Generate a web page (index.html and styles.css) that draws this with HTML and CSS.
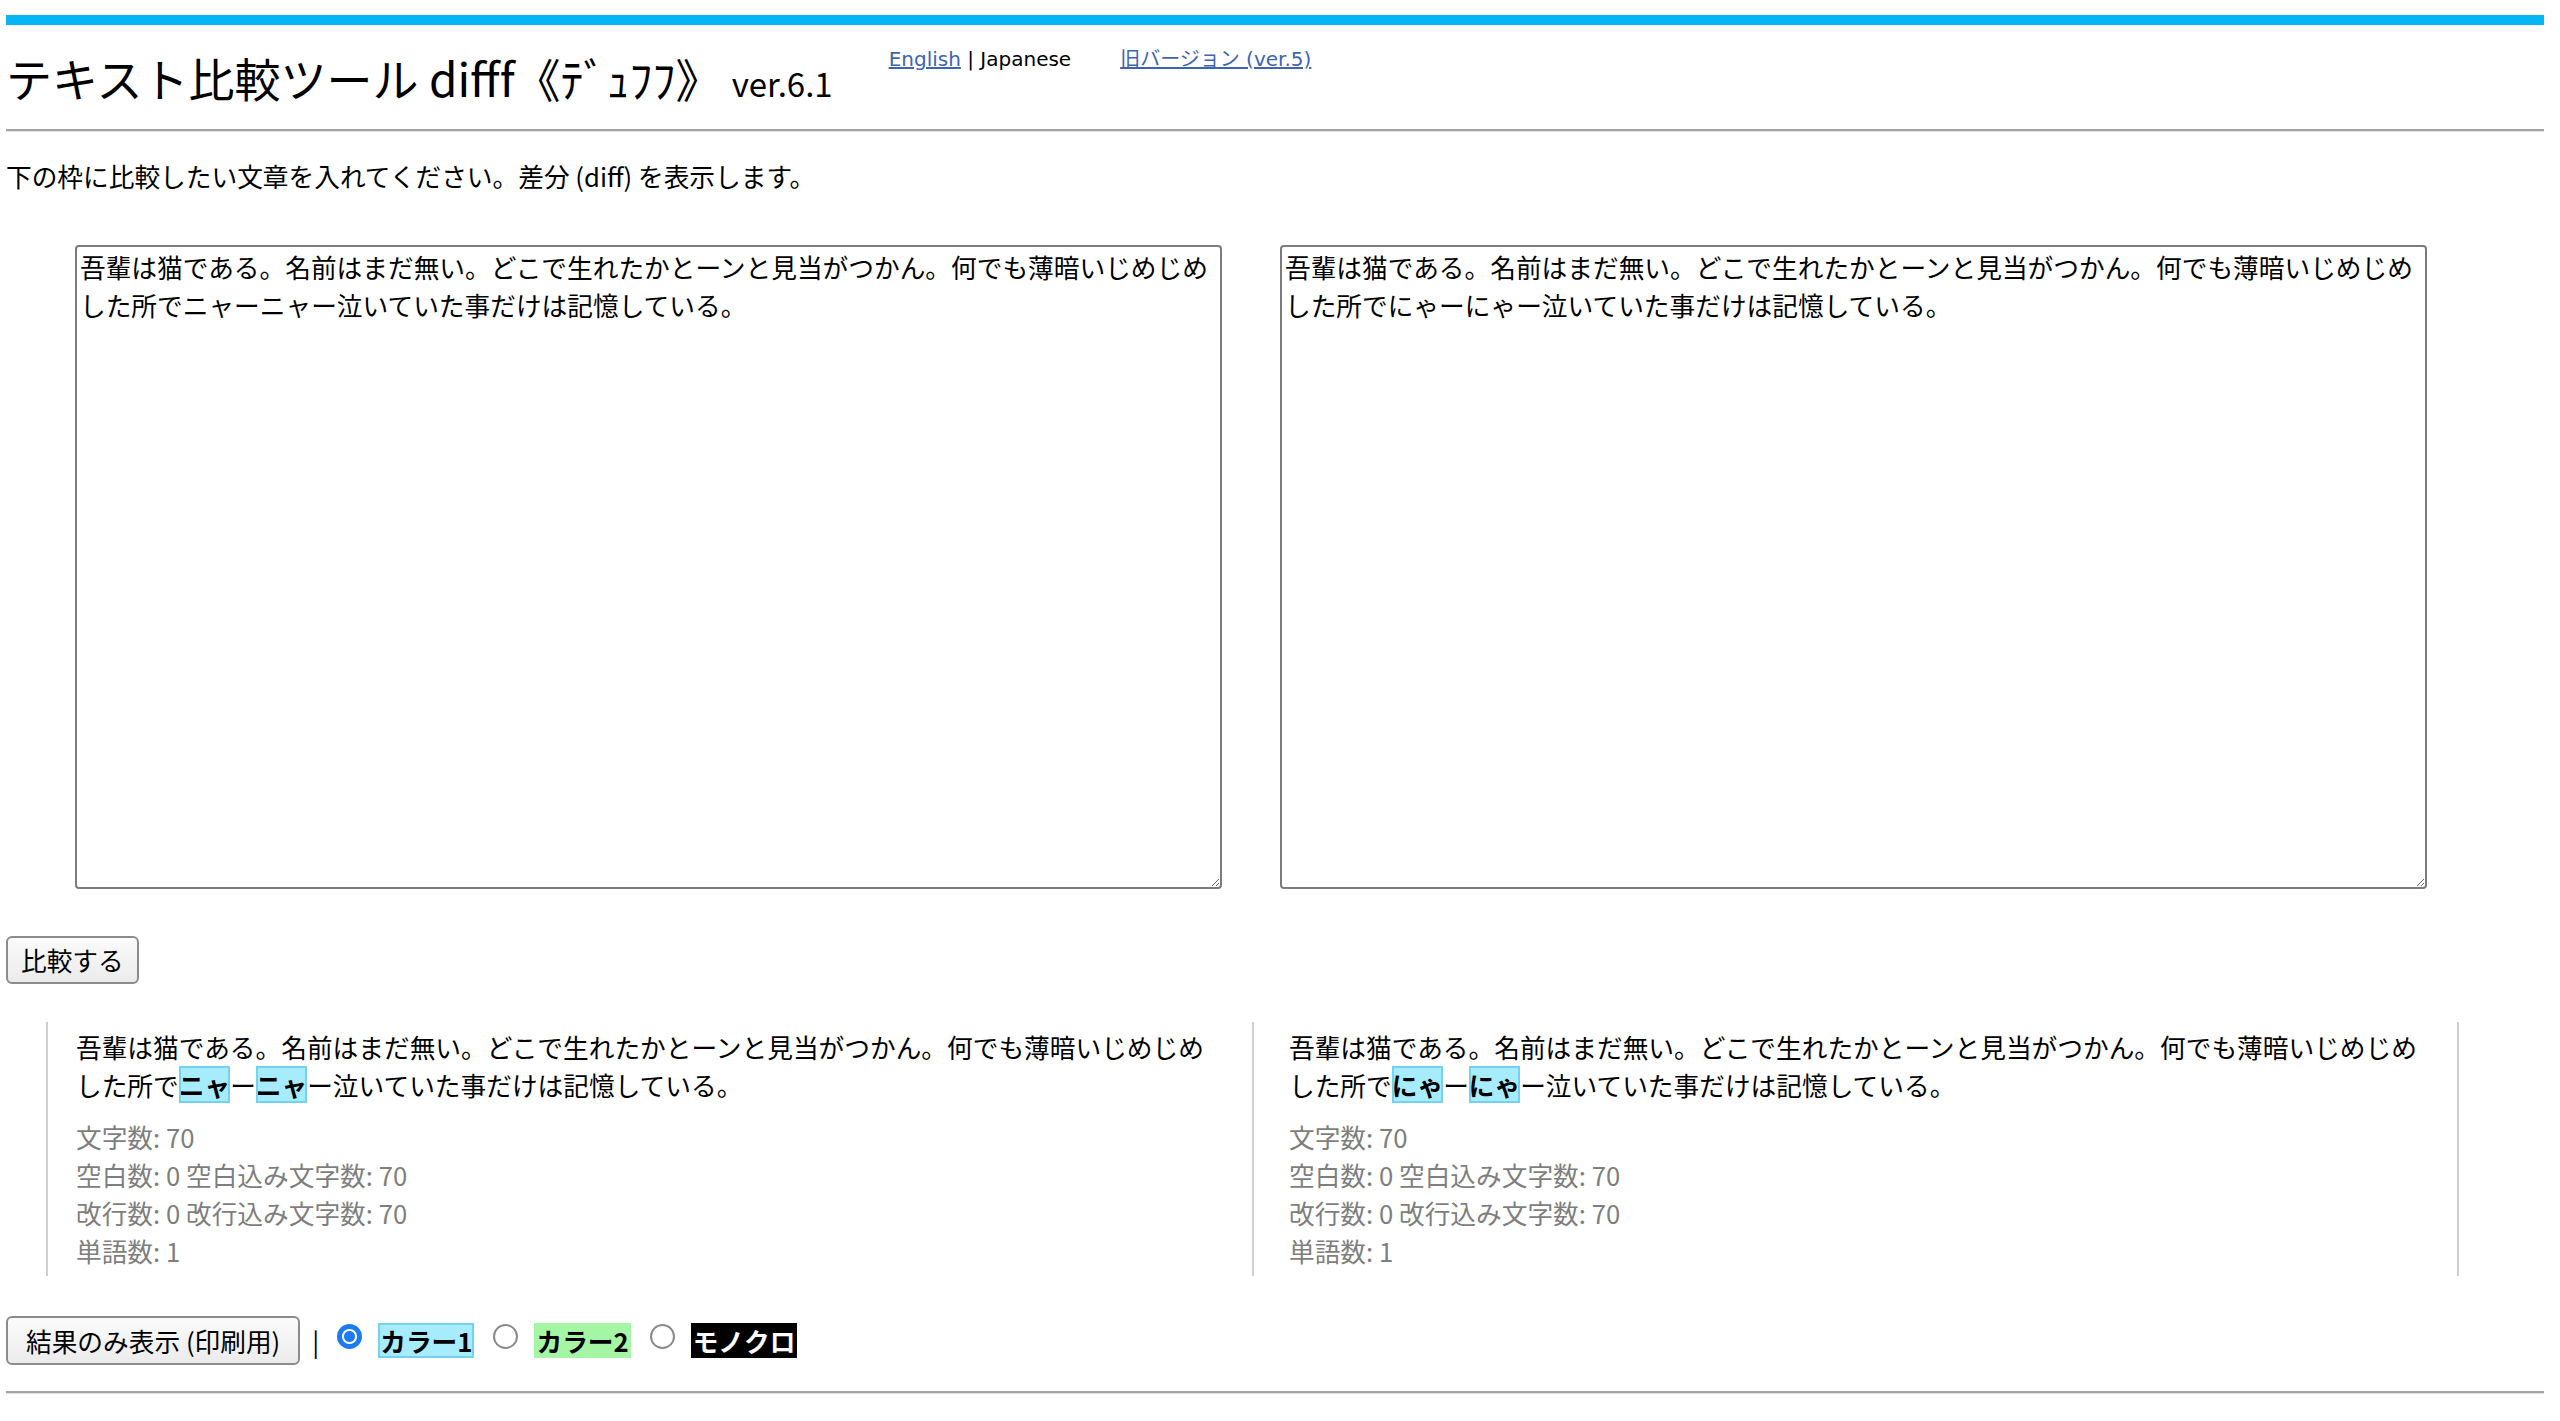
FILE: index.html
```html
<!DOCTYPE html>
<html lang="ja">
<head>
<meta charset="utf-8">
<title>テキスト比較ツール difff《ﾃﾞｭﾌﾌ》</title>
<link rel="stylesheet" href="styles.css">
</head>
<body>
<div class="bar"></div>
<header class="head">
  <h1 class="title">テキスト比較ツール difff《ﾃﾞｭﾌﾌ》<span class="ver">ver.6.1</span></h1>
  <div class="lang"><a href="#">English</a> | Japanese</div>
  <div class="old"><a href="#">旧バージョン (ver.5)</a></div>
</header>
<hr class="rule">
<p class="lead">下の枠に比較したい文章を入れてください。差分 (diff) を表示します。</p>
<div class="inputs">
  <textarea class="ta">吾輩は猫である。名前はまだ無い。どこで生れたかとーンと見当がつかん。何でも薄暗いじめじめした所でニャーニャー泣いていた事だけは記憶している。</textarea>
  <textarea class="ta">吾輩は猫である。名前はまだ無い。どこで生れたかとーンと見当がつかん。何でも薄暗いじめじめした所でにゃーにゃー泣いていた事だけは記憶している。</textarea>
</div>
<button class="btn">比較する</button>
<div class="results">
  <div class="col col-a">
    <p class="diff">吾輩は猫である。名前はまだ無い。どこで生れたかとーンと見当がつかん。何でも薄暗いじめじめした所で<em class="hl">ニャ</em>ー<em class="hl">ニャ</em>ー泣いていた事だけは記憶している。</p>
    <div class="stats">
      <div>文字数: 70</div>
      <div>空白数: 0 空白込み文字数: 70</div>
      <div>改行数: 0 改行込み文字数: 70</div>
      <div>単語数: 1</div>
    </div>
  </div>
  <div class="col col-b">
    <p class="diff">吾輩は猫である。名前はまだ無い。どこで生れたかとーンと見当がつかん。何でも薄暗いじめじめした所で<em class="hl">にゃ</em>ー<em class="hl">にゃ</em>ー泣いていた事だけは記憶している。</p>
    <div class="stats">
      <div>文字数: 70</div>
      <div>空白数: 0 空白込み文字数: 70</div>
      <div>改行数: 0 改行込み文字数: 70</div>
      <div>単語数: 1</div>
    </div>
  </div>
</div>
<div class="controls">
  <button class="btn btn-print">結果のみ表示 (印刷用)</button>
  <span class="sep">|</span>
  <label class="opt"><input type="radio" name="color" class="radio" checked><span class="tag tag-c1">カラー1</span></label>
  <label class="opt"><input type="radio" name="color" class="radio"><span class="tag tag-c2">カラー2</span></label>
  <label class="opt"><input type="radio" name="color" class="radio"><span class="tag tag-mono">モノクロ</span></label>
</div>
<hr class="rule rule-bottom">
</body>
</html>
```
FILE: styles.css
```css
html, body {
  background: #ffffff;
}
body {
  margin: 0;
  padding: 15px 16px 0 6px;
  font-family: "Noto Sans CJK JP", "Noto Sans", sans-serif;
  font-size: 25.7px;
  line-height: 38px;
  color: #000;
}
.bar {
  height: 10px;
  background: #04b6f4;
}
.head {
  display: flex;
  align-items: flex-start;
}
.title {
  margin: 22px 0 0 0;
  font-size: 46px;
  font-weight: normal;
  line-height: 60px;
  white-space: nowrap;
}
.ver {
  font-size: 33px;
  margin-left: 10px;
}
.lang, .old {
  margin-top: 22px;
  font-family: "DejaVu Sans", "Noto Sans CJK JP", sans-serif;
  font-size: 20px;
  line-height: 24px;
  white-space: nowrap;
}
.lang { margin-left: 56px; }
.old { margin-left: 49px; }
.lang a, .old a {
  color: #3d64ae;
  text-decoration: underline;
}
.rule {
  margin: 16px 0 0 0;
  height: 0;
  border: 0;
  border-top: 2px solid #a4a4a4;
  border-bottom: 1px solid #e2e2e2;
}
.lead {
  margin: 25px 0 0 0;
}
.inputs {
  display: flex;
  gap: 58px;
  margin: 50px 0 0 69px;
}
.ta {
  box-sizing: border-box;
  width: 1147px;
  height: 644px;
  margin: 0;
  padding: 1px 3px;
  border: 2px solid #7c7c7c;
  border-radius: 4px;
  font-family: "Noto Sans CJK JP", sans-serif;
  font-size: 25.7px;
  line-height: 38px;
  color: #000;
  resize: both;
}
.btn {
  display: block;
  box-sizing: border-box;
  height: 48px;
  margin: 47px 0 0 0;
  padding: 0 13px;
  border: 2px solid #8b8b8b;
  border-radius: 6px;
  background: linear-gradient(#fbfbfb, #ebebeb);
  font-family: "Noto Sans CJK JP", sans-serif;
  font-size: 25.7px;
  line-height: 44px;
  color: #000;
}
.results {
  display: flex;
  margin: 38px 0 0 40px;
}
.col {
  box-sizing: border-box;
  width: 1206px;
  padding: 6px 40px 6px 28px;
  border-left: 2px solid #cfcfcf;
}
.col-b {
  width: 1207px;
  padding-left: 35px;
  border-right: 2px solid #cfcfcf;
}
.diff {
  margin: 0;
}
.hl {
  font-style: normal;
  font-weight: bold;
  background: #a6ecfd;
  outline: 2px solid #74d2ee;
  outline-offset: -2px;
}
.stats {
  margin-top: 14px;
  color: #7e7e7e;
}
.controls {
  display: flex;
  align-items: center;
  margin-top: 40px;
}
.controls .btn {
  margin: 0;
  height: 49px;
  padding: 0 18px;
}
.sep {
  margin: 0 18px 0 12px;
}
.opt {
  display: flex;
  align-items: center;
  margin-right: 19px;
}
.radio {
  appearance: none;
  -webkit-appearance: none;
  box-sizing: border-box;
  width: 25px;
  height: 25px;
  margin: -8px 16px 0 0;
  border: 2px solid #8a8a8a;
  border-radius: 50%;
  background: #fff;
}
.radio:checked {
  border: 2px solid #1d7bf2;
  background: radial-gradient(circle, #1d7bf2 0 5px, #fff 6px 7px, #1d7bf2 8px);
}
.tag {
  display: inline-block;
  height: 35px;
  line-height: 35px;
  padding: 0 2px;
  font-weight: bold;
}
.tag-c1 {
  background: #a6ecfd;
  box-shadow: inset 0 0 0 2px #74d2ee;
}
.tag-c2 {
  background: #a4f6a4;
}
.tag-mono {
  background: #000;
  color: #fff;
}
.rule-bottom {
  margin-top: 26px;
}
```
